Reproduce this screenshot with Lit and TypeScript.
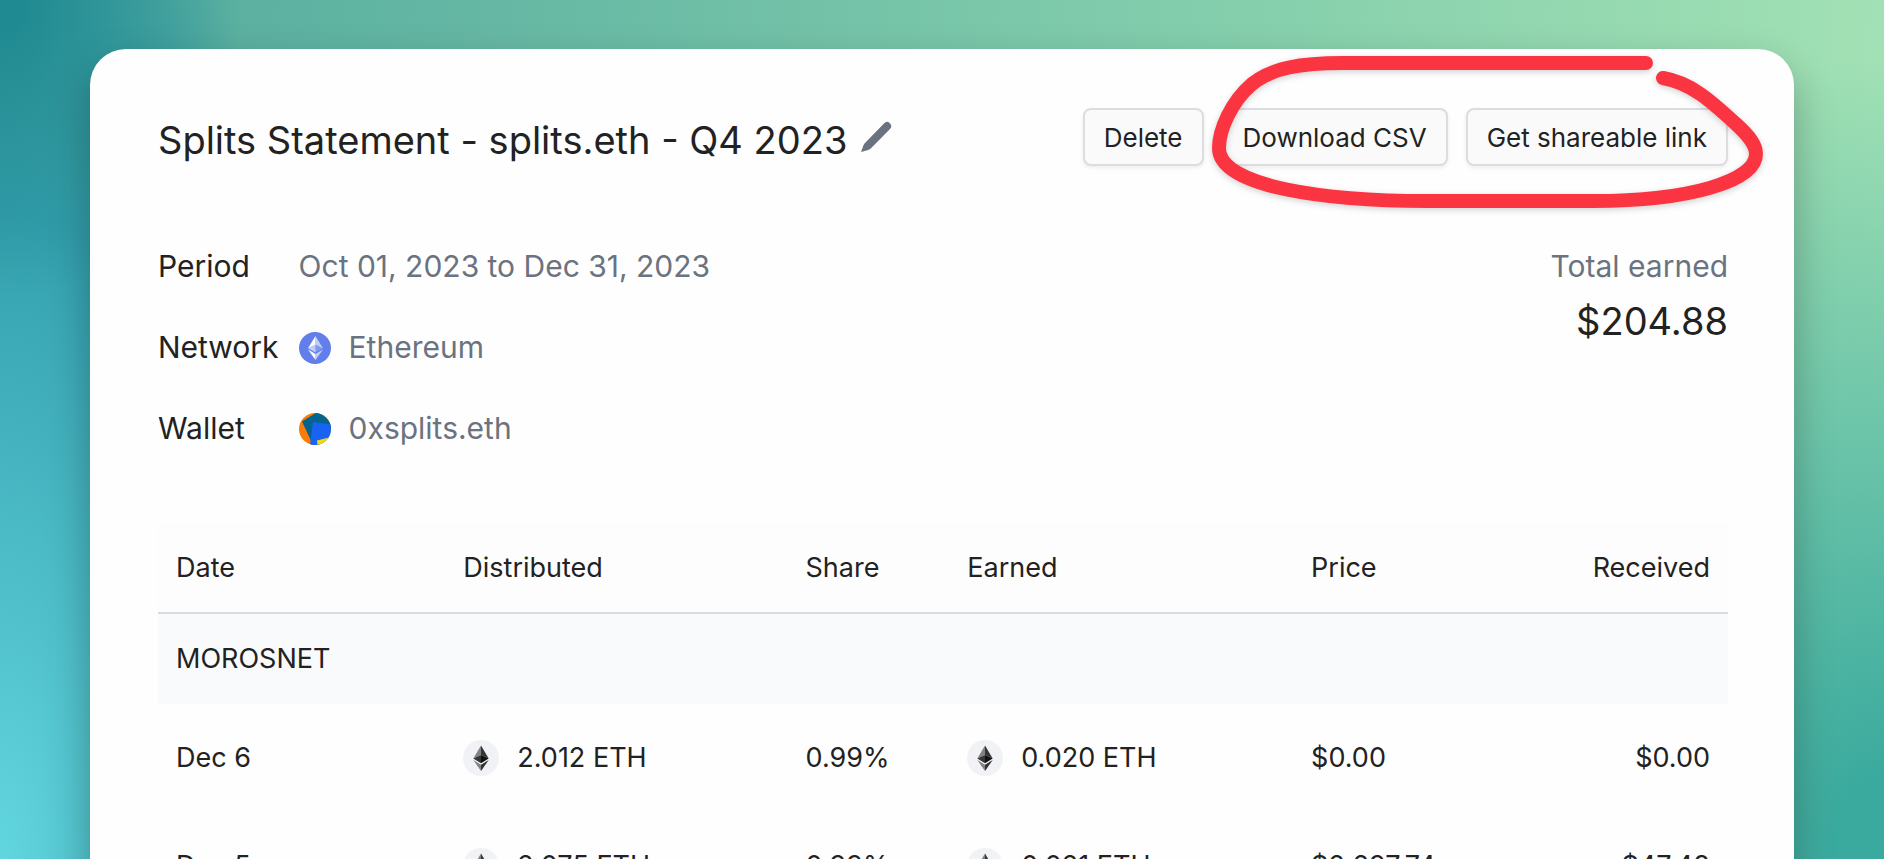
import { LitElement, html, css, svg } from "lit";
import { customElement } from "lit/decorators.js";

interface Payment {
  date: string;
  distributed: string;
  share: string;
  earned: string;
  price: string;
  received: string;
}

const payments: Payment[] = [
  { date: "Dec 6", distributed: "2.012 ETH", share: "0.99%", earned: "0.020 ETH", price: "$0.00", received: "$0.00" },
  { date: "Dec 5", distributed: "2.075 ETH", share: "0.99%", earned: "0.021 ETH", price: "$2,297.74", received: "$47.48" },
];

const pencil = svg`<svg class="pencil" viewBox="0 0 34 34" aria-hidden="true">
  <path d="M2 32 L4.4 25.6 Q5 24 6.2 22.8 L25 3.4 A4.1 4.1 0 0 1 31 9 L12 28.2 Q10.8 29.4 9.2 30 Z" fill="#6b7280"/>
</svg>`;

const networkIcon = svg`<svg class="badge" viewBox="0 0 32 32" aria-hidden="true">
  <circle cx="16" cy="16" r="16" fill="#627eea"/>
  <path d="M16.5 4v8.87l7.5 3.35z" fill="#fff" fill-opacity=".602"/>
  <path d="M16.5 4L9 16.22l7.5-3.35z" fill="#fff"/>
  <path d="M16.5 21.97v6.03L24 17.62z" fill="#fff" fill-opacity=".602"/>
  <path d="M16.5 28v-6.03L9 17.62z" fill="#fff"/>
  <path d="M16.5 20.57l7.5-4.35-7.5-3.35z" fill="#fff" fill-opacity=".2"/>
  <path d="M9 16.22l7.5 4.35v-7.7z" fill="#fff" fill-opacity=".602"/>
</svg>`;

const walletIcon = svg`<svg class="badge" viewBox="0 0 32 32" aria-hidden="true">
  <clipPath id="disc"><circle cx="16" cy="16" r="16"/></clipPath>
  <g clip-path="url(#disc)">
    <rect width="32" height="32" fill="#fb7c06"/>
    <path d="M3 8.5 L20 -2 L34 0 V14 L14 32 Z" fill="#04648f"/>
    <path d="M14 9 L32 11.5 V32 H11 Z" fill="#1863f4"/>
    <path d="M18 27.5 L32 24 V32 H18.5 Z" fill="#f5da06"/>
  </g>
</svg>`;

const tokenIcon = svg`<svg class="token" viewBox="0 0 36 36" aria-hidden="true">
  <circle cx="18" cy="18" r="18" fill="#f1f2f6"/>
  <path d="M18 5.5 L10.3 18.6 L18 15z" fill="#828282"/>
  <path d="M18 5.5 V15 L25.7 18.6z" fill="#343434"/>
  <path d="M10.3 18.6 L18 15 V23.2z" fill="#343434"/>
  <path d="M25.7 18.6 L18 15 V23.2z" fill="#101010"/>
  <path d="M10.3 20.1 L18 24.7 V31z" fill="#828282"/>
  <path d="M25.7 20.1 L18 24.7 V31z" fill="#343434"/>
</svg>`;

@customElement("app-root")
export class AppRoot extends LitElement {
  static styles = css`
    :host {
      display: block;
      box-sizing: border-box;
      height: 100vh;
      overflow: hidden;
      padding: 49px 90px 0;
      font-family: Inter, "Liberation Sans", sans-serif;
      color: #222;
      background:
        radial-gradient(ellipse 240px 300px at 0 0, #208a92 10%, #208a9200),
        radial-gradient(ellipse 420px 1000px at 0 100%, #62d6de, #34a0ae 65%, #34a0ae00),
        radial-gradient(ellipse 520px 800px at 100% 100%, #3aaa9e 10%, #3aaa9e00),
        linear-gradient(95deg, #58ae9f 8%, #63b6a3 22%, #82cdac 60%, #a5e3b5);
    }
    .card {
      box-sizing: border-box;
      min-height: 100%;
      padding: 59px 66px 40px 68px;
      border-radius: 36px 36px 0 0;
      background: #fefefe;
      box-shadow: 0 18px 40px rgba(0, 0, 0, 0.28);
    }
    .header {
      display: flex;
      justify-content: space-between;
      align-items: flex-start;
    }
    .heading {
      display: flex;
      align-items: center;
      gap: 12px;
    }
    h1 {
      margin: 0;
      font-size: 38px;
      line-height: 64px;
      font-weight: 400;
    }
    .edit {
      display: flex;
      padding: 0 0 6px;
      border: 0;
      background: none;
    }
    .pencil {
      width: 34px;
      height: 34px;
    }
    .actions {
      position: relative;
      display: flex;
      gap: 18px;
    }
    .action {
      height: 58px;
      padding: 0 19px;
      border: 2px solid #dcdde3;
      border-radius: 8px;
      background: #fafafa;
      box-shadow: 0 2px 4px rgba(0, 0, 0, 0.07);
      font: inherit;
      font-size: 26px;
      color: inherit;
    }
    .marker {
      position: absolute;
      top: -54px;
      right: -36px;
      width: 554px;
      height: 160px;
      pointer-events: none;
      filter: drop-shadow(0 2px 3px rgba(0, 0, 0, 0.18));
    }
    .summary {
      display: flex;
      justify-content: space-between;
      align-items: flex-start;
      margin-top: 72px;
      font-size: 30px;
      line-height: 45px;
    }
    .facts {
      display: grid;
      grid-template-columns: auto auto;
      gap: 36px 20px;
      margin: 0;
    }
    .facts dd {
      display: flex;
      align-items: center;
      gap: 18px;
      margin: 0;
      color: #6b7280;
    }
    .badge {
      width: 32px;
      height: 32px;
    }
    .total {
      text-align: right;
    }
    .total-label {
      color: #6b7280;
    }
    .total-value {
      font-size: 38px;
      line-height: 64px;
    }
    table {
      width: 100%;
      margin-top: 72px;
      border-collapse: collapse;
      table-layout: fixed;
      font-size: 27px;
      line-height: 36px;
    }
    th,
    td {
      box-sizing: border-box;
      padding: 0 18px;
      font-weight: 400;
      text-align: left;
    }
    .columns th {
      height: 90px;
      border-bottom: 2px solid #d9dbe0;
      background: #fdfdfd;
    }
    .group th {
      height: 91px;
      background: #f9fafc;
    }
    .payment td {
      height: 108px;
    }
    .date { width: 18.3%; }
    .distributed { width: 21.8%; }
    .share { width: 10.3%; }
    .earned { width: 21.9%; }
    .columns .end,
    .payment .end {
      text-align: right;
    }
    .amount {
      display: flex;
      align-items: center;
      gap: 18px;
    }
    .token {
      width: 36px;
      height: 36px;
    }
  `;

  private renderPayment(p: Payment) {
    return html`<tr class="payment">
      <td>${p.date}</td>
      <td><div class="amount">${tokenIcon}<span>${p.distributed}</span></div></td>
      <td>${p.share}</td>
      <td><div class="amount">${tokenIcon}<span>${p.earned}</span></div></td>
      <td>${p.price}</td>
      <td class="end">${p.received}</td>
    </tr>`;
  }

  render() {
    return html`<main class="card">
      <header class="header">
        <div class="heading">
          <h1>Splits Statement - splits.eth - Q4 2023</h1>
          <button class="edit" type="button" aria-label="Edit title">${pencil}</button>
        </div>
        <div class="actions">
          <button class="action" type="button">Delete</button>
          <button class="action" type="button">Download CSV</button>
          <button class="action" type="button">Get shareable link</button>
          <svg class="marker" viewBox="1210 54 554 160" aria-hidden="true">
            <path
              d="M1646 63 H1343 C1300 63 1272 68 1252 84 C1231 102 1219 130 1219 148 C1219 188 1330 201 1428 201 H1593 C1690 201 1756 181 1756 154 C1756 144 1748 135 1736 124 C1712 102 1692 83 1663 78"
              fill="none" stroke="#fb3441" stroke-width="14" stroke-linecap="round" stroke-linejoin="round"/>
          </svg>
        </div>
      </header>
      <section class="summary">
        <dl class="facts">
          <dt>Period</dt>
          <dd>Oct 01, 2023 to Dec 31, 2023</dd>
          <dt>Network</dt>
          <dd>${networkIcon}<span>Ethereum</span></dd>
          <dt>Wallet</dt>
          <dd>${walletIcon}<span>0xsplits.eth</span></dd>
        </dl>
        <div class="total">
          <div class="total-label">Total earned</div>
          <div class="total-value">$204.88</div>
        </div>
      </section>
      <table>
        <thead>
          <tr class="columns">
            <th class="date" scope="col">Date</th>
            <th class="distributed" scope="col">Distributed</th>
            <th class="share" scope="col">Share</th>
            <th class="earned" scope="col">Earned</th>
            <th scope="col">Price</th>
            <th class="end" scope="col">Received</th>
          </tr>
        </thead>
        <tbody>
          <tr class="group"><th colspan="6" scope="rowgroup">MOROSNET</th></tr>
          ${payments.map((p) => this.renderPayment(p))}
        </tbody>
      </table>
    </main>`;
  }
}
